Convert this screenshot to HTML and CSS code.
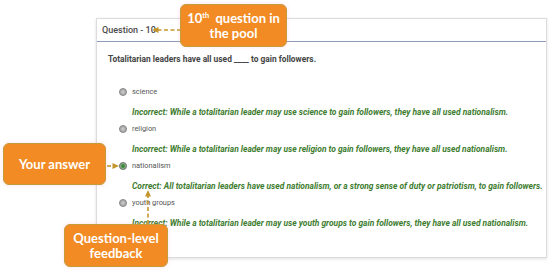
FILE: index.html
```html
<!DOCTYPE html>
<html>
<head>
<meta charset="utf-8">
<link rel="stylesheet" href="styles.css">
</head>
<body>
<div class="stage">
  <div class="card">
    <div class="card-head">Question - 10</div>
    <div class="card-body">
      <div class="question">Totalitarian leaders have all used ____ to gain followers.</div>
      <ul class="options">
        <li class="option">
          <div class="opt-row"><span class="radio"></span><span class="opt-label">science</span></div>
          <div class="feedback">Incorrect: While a totalitarian leader may use science to gain followers, they have all used nationalism.</div>
        </li>
        <li class="option">
          <div class="opt-row"><span class="radio"></span><span class="opt-label">religion</span></div>
          <div class="feedback">Incorrect: While a totalitarian leader may use religion to gain followers, they have all used nationalism.</div>
        </li>
        <li class="option">
          <div class="opt-row"><span class="radio selected"></span><span class="opt-label">nationalism</span></div>
          <div class="feedback">Correct: All totalitarian leaders have used nationalism, or a strong sense of duty or patriotism, to gain followers.</div>
        </li>
        <li class="option">
          <div class="opt-row"><span class="radio"></span><span class="opt-label">youth groups</span></div>
          <div class="feedback">Incorrect: While a totalitarian leader may use youth groups to gain followers, they have all used nationalism.</div>
        </li>
      </ul>
    </div>
  </div>

  <svg class="arrows" width="557" height="272" viewBox="0 0 557 272">
    <g stroke="#c4962a" stroke-width="1.6" stroke-dasharray="4 2.5" fill="none">
      <line x1="181" y1="30" x2="158" y2="30"/>
      <line x1="107" y1="166" x2="113" y2="166"/>
      <line x1="148" y1="224" x2="148" y2="196"/>
    </g>
    <g fill="#c4962a">
      <polygon points="152,30 158.5,27 158.5,33"/>
      <polygon points="119,166 112.5,163 112.5,169"/>
      <polygon points="148,190 145,196.5 151,196.5"/>
    </g>
  </svg>

  <div class="callout callout-pool"><span>10<sup>th</sup> question in<br>the pool</span></div>
  <div class="callout callout-answer">Your answer</div>
  <div class="callout callout-feedback">Question-level<br>feedback</div>
</div>
</body>
</html>
```
FILE: styles.css
```css
html, body {
  margin: 0;
  padding: 0;
  background: #ffffff;
}
.stage {
  position: relative;
  width: 557px;
  height: 272px;
  overflow: hidden;
  padding-top: 18px;
  padding-left: 96px;
  box-sizing: border-box;
  font-family: Roboto, "Liberation Sans", Arial, sans-serif;
}
.card {
  width: 451px;
  height: 240px;
  box-sizing: border-box;
  border: 1px solid #dcdcde;
  box-shadow: 0 1px 3px rgba(0,0,0,0.12);
  background: #fff;
}
.card-head {
  height: 23px;
  box-sizing: border-box;
  border-bottom: 1.5px solid #8e9bb9;
  padding-left: 5px;
  font-size: 9px;
  font-weight: 500;
  line-height: 23px;
  color: #4a4a4a;
}
.card-body {
  padding: 10px 0 0 11px;
}
.question {
  font-size: 8.4px;
  font-weight: 700;
  line-height: 14px;
  color: #444;
}
.options {
  list-style: none;
  margin: 20px 0 0 11px;
  padding: 0;
  display: flex;
  flex-direction: column;
  gap: 5px;
}
.option {
  display: flex;
  flex-direction: column;
}
.opt-row {
  display: flex;
  align-items: center;
  gap: 5px;
  height: 12px;
}
.radio {
  width: 8px;
  height: 8px;
  border-radius: 50%;
  box-sizing: border-box;
  background: #a8a8a8;
  border: 1px solid #8a8a8a;
  box-shadow: inset 0 0 0 1.3px #a8a8a8, inset 0 0 0 3px #c6c6c6;
}
.radio.selected {
  background: #3c8a3a;
  border-color: #777;
  box-shadow: inset 0 0 0 1px #9cb89a;
}
.opt-label {
  font-size: 7.4px;
  color: #555;
  line-height: 12px;
}
.feedback {
  margin-top: 8px;
  margin-left: 13px;
  height: 12px;
  line-height: 12px;
  font-size: 8.45px;
  font-weight: 700;
  font-style: italic;
  color: #3e7d30;
  white-space: nowrap;
}
.arrows {
  position: absolute;
  left: 0;
  top: 0;
}
.callout {
  position: absolute;
  box-sizing: border-box;
  background: #f28b24;
  border: 1px solid #c29d3a;
  border-radius: 6px;
  color: #fff;
  font-family: Lato, "Open Sans", "Liberation Sans", sans-serif;
  font-weight: 700;
  font-size: 13px;
  line-height: 15px;
  text-align: center;
  display: flex;
  align-items: center;
  justify-content: center;
  box-shadow: 0 0 4px rgba(255, 160, 210, 0.35);
}
.callout sup {
  font-size: 7.5px;
  line-height: 0;
  vertical-align: 5px;
  margin-right: 3px;
}
.callout-pool {
  left: 180px;
  top: 4px;
  width: 107px;
  height: 43px;
}
.callout-answer {
  left: 3px;
  top: 143px;
  width: 103px;
  height: 42px;
}
.callout-feedback {
  left: 64px;
  top: 224px;
  width: 104px;
  height: 43px;
}
```
